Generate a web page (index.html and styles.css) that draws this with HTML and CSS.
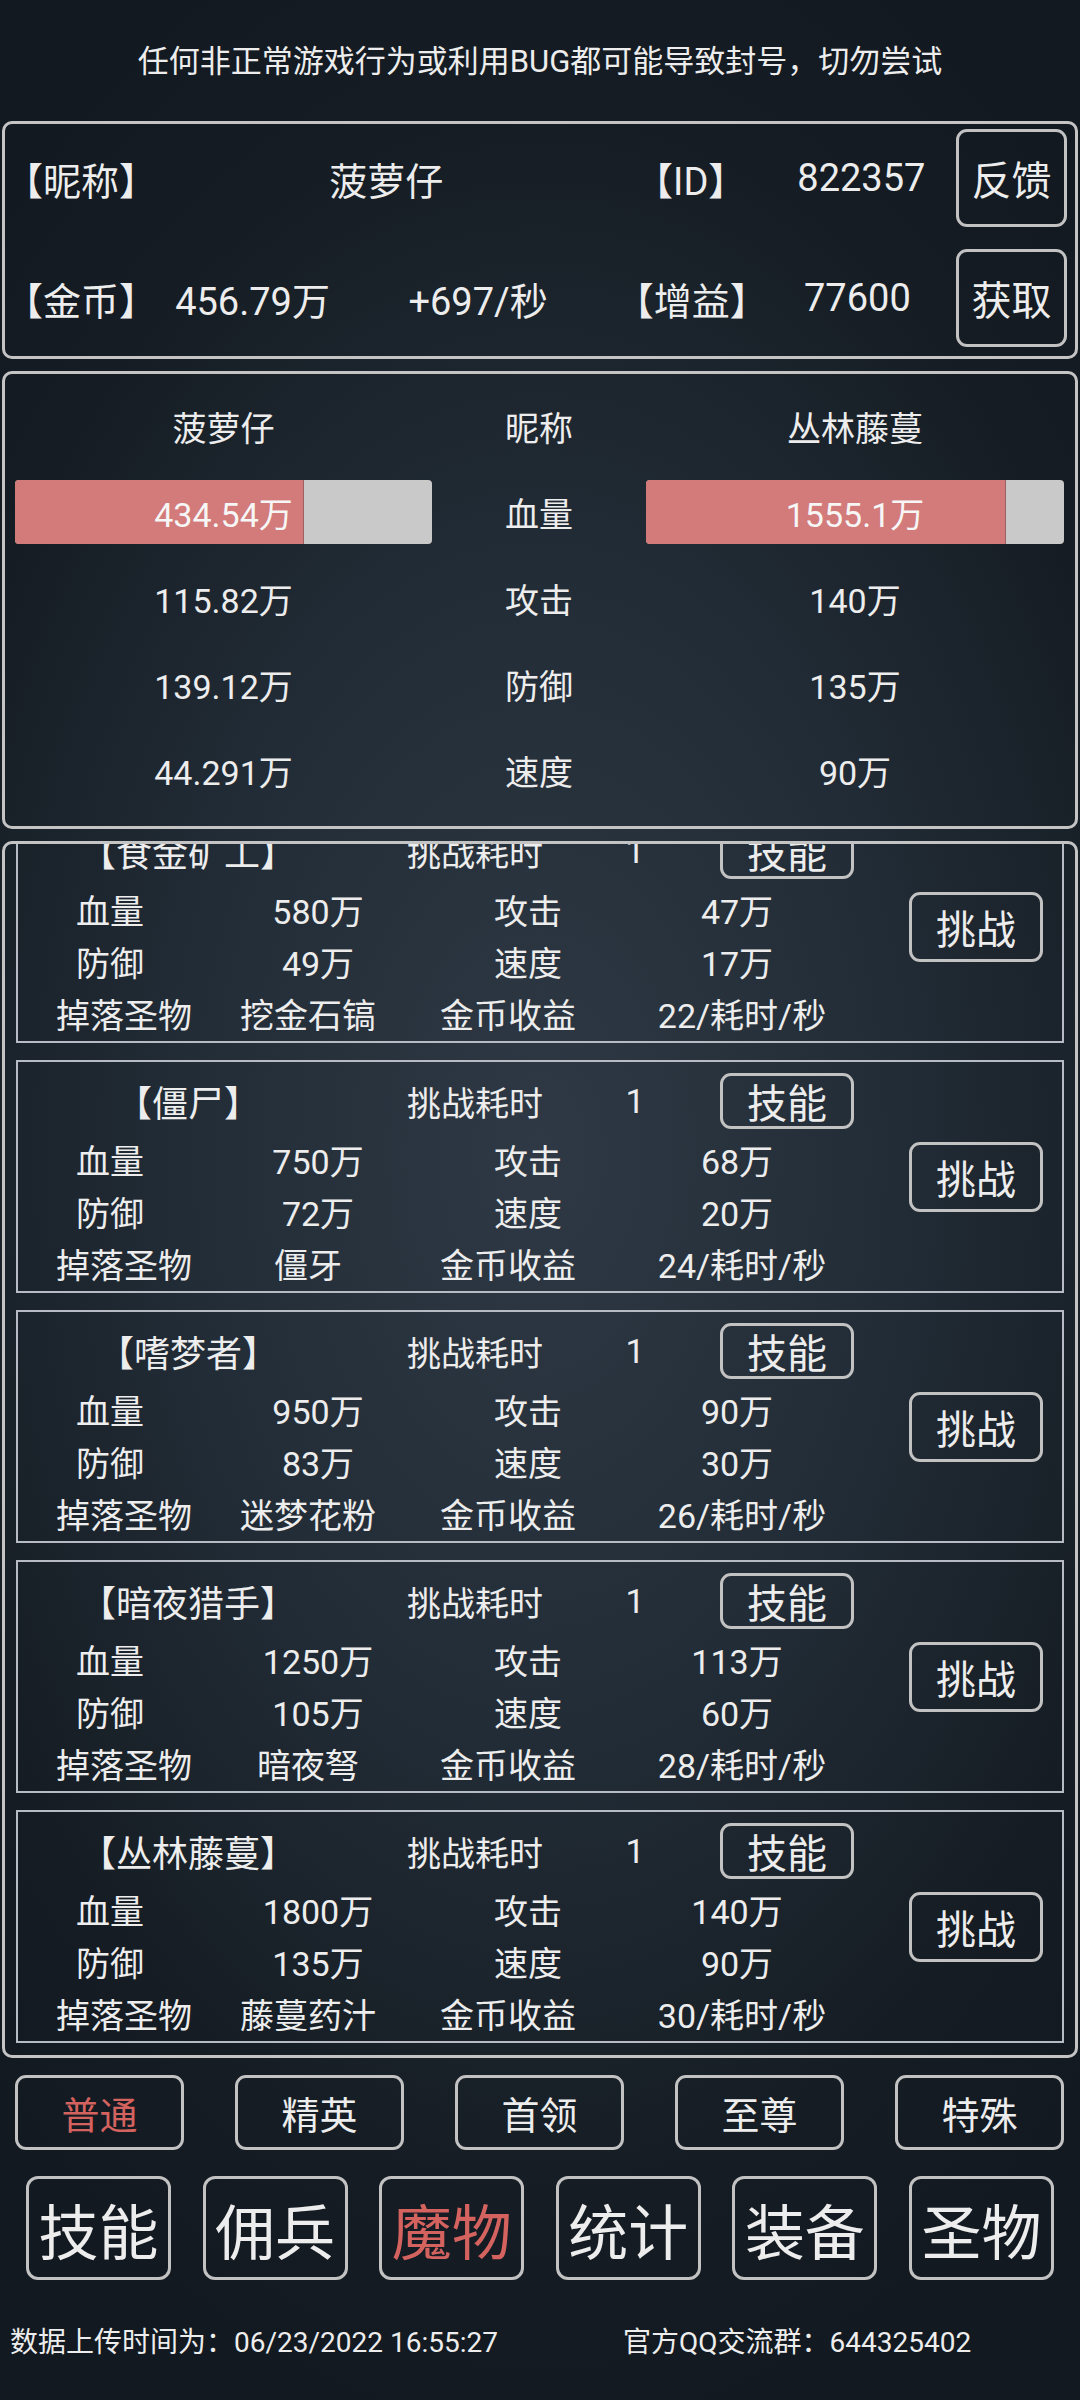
FILE: index.html
```html
<!DOCTYPE html>
<html lang="zh">
  <head>
    <meta charset="UTF-8" />
    <meta name="viewport" content="width=device-width, initial-scale=1.0" />
    <title>魔物</title>
    <link rel="stylesheet" href="styles.css">
  </head>
  <body>
    <div class="notice">任何非正常游戏行为或利用BUG都可能导致封号，切勿尝试</div>

    <div class="info box">
      <div class="info-row">
        <span class="c160">【昵称】</span>
        <span class="c444">菠萝仔</span>
        <span class="c166">【ID】</span>
        <span class="c176">822357</span>
        <button class="btn info-btn">反馈</button>
      </div>
      <div class="info-row">
        <span class="c160">【金币】</span>
        <span class="c176">456.79万</span>
        <span class="c276">+697/秒</span>
        <span class="c150">【增益】</span>
        <span class="c184">77600</span>
        <button class="btn info-btn">获取</button>
      </div>
    </div>

    <div class="battle box">
      <div class="battle-row">
        <span>菠萝仔</span><span>昵称</span><span>丛林藤蔓</span>
      </div>
      <div class="battle-row">
        <div class="hp"><div class="hp-fill" style="width: 69%"></div><span>434.54万</span></div>
        <span>血量</span>
        <div class="hp"><div class="hp-fill" style="width: 86%"></div><span>1555.1万</span></div>
      </div>
      <div class="battle-row">
        <span>115.82万</span><span>攻击</span><span>140万</span>
      </div>
      <div class="battle-row">
        <span>139.12万</span><span>防御</span><span>135万</span>
      </div>
      <div class="battle-row">
        <span>44.291万</span><span>速度</span><span>90万</span>
      </div>
    </div>

    <div class="monsters box">
      <div class="monster-list">

        <div class="card">
          <div class="card-main">
            <div class="card-head">
              <span class="h-name">【食金矿工】</span>
              <span class="h-label">挑战耗时</span>
              <span class="h-num">1</span>
              <button class="btn skill-btn">技能</button>
            </div>
            <div class="stat-row">
              <span class="s1">血量</span><span class="s2">580万</span><span class="s3">攻击</span><span class="s4">47万</span>
            </div>
            <div class="stat-row">
              <span class="s1">防御</span><span class="s2">49万</span><span class="s3">速度</span><span class="s4">17万</span>
            </div>
            <div class="stat-row">
              <span class="d1">掉落圣物</span><span class="d2">挖金石镐</span><span class="d3">金币收益</span><span class="d4">22/耗时/秒</span>
            </div>
          </div>
          <button class="btn fight-btn">挑战</button>
        </div>

        <div class="card">
          <div class="card-main">
            <div class="card-head">
              <span class="h-name">【僵尸】</span>
              <span class="h-label">挑战耗时</span>
              <span class="h-num">1</span>
              <button class="btn skill-btn">技能</button>
            </div>
            <div class="stat-row">
              <span class="s1">血量</span><span class="s2">750万</span><span class="s3">攻击</span><span class="s4">68万</span>
            </div>
            <div class="stat-row">
              <span class="s1">防御</span><span class="s2">72万</span><span class="s3">速度</span><span class="s4">20万</span>
            </div>
            <div class="stat-row">
              <span class="d1">掉落圣物</span><span class="d2">僵牙</span><span class="d3">金币收益</span><span class="d4">24/耗时/秒</span>
            </div>
          </div>
          <button class="btn fight-btn">挑战</button>
        </div>

        <div class="card">
          <div class="card-main">
            <div class="card-head">
              <span class="h-name">【嗜梦者】</span>
              <span class="h-label">挑战耗时</span>
              <span class="h-num">1</span>
              <button class="btn skill-btn">技能</button>
            </div>
            <div class="stat-row">
              <span class="s1">血量</span><span class="s2">950万</span><span class="s3">攻击</span><span class="s4">90万</span>
            </div>
            <div class="stat-row">
              <span class="s1">防御</span><span class="s2">83万</span><span class="s3">速度</span><span class="s4">30万</span>
            </div>
            <div class="stat-row">
              <span class="d1">掉落圣物</span><span class="d2">迷梦花粉</span><span class="d3">金币收益</span><span class="d4">26/耗时/秒</span>
            </div>
          </div>
          <button class="btn fight-btn">挑战</button>
        </div>

        <div class="card">
          <div class="card-main">
            <div class="card-head">
              <span class="h-name">【暗夜猎手】</span>
              <span class="h-label">挑战耗时</span>
              <span class="h-num">1</span>
              <button class="btn skill-btn">技能</button>
            </div>
            <div class="stat-row">
              <span class="s1">血量</span><span class="s2">1250万</span><span class="s3">攻击</span><span class="s4">113万</span>
            </div>
            <div class="stat-row">
              <span class="s1">防御</span><span class="s2">105万</span><span class="s3">速度</span><span class="s4">60万</span>
            </div>
            <div class="stat-row">
              <span class="d1">掉落圣物</span><span class="d2">暗夜弩</span><span class="d3">金币收益</span><span class="d4">28/耗时/秒</span>
            </div>
          </div>
          <button class="btn fight-btn">挑战</button>
        </div>

        <div class="card">
          <div class="card-main">
            <div class="card-head">
              <span class="h-name">【丛林藤蔓】</span>
              <span class="h-label">挑战耗时</span>
              <span class="h-num">1</span>
              <button class="btn skill-btn">技能</button>
            </div>
            <div class="stat-row">
              <span class="s1">血量</span><span class="s2">1800万</span><span class="s3">攻击</span><span class="s4">140万</span>
            </div>
            <div class="stat-row">
              <span class="s1">防御</span><span class="s2">135万</span><span class="s3">速度</span><span class="s4">90万</span>
            </div>
            <div class="stat-row">
              <span class="d1">掉落圣物</span><span class="d2">藤蔓药汁</span><span class="d3">金币收益</span><span class="d4">30/耗时/秒</span>
            </div>
          </div>
          <button class="btn fight-btn">挑战</button>
        </div>

      </div>
    </div>

    <div class="filters">
      <button class="btn filter-btn active">普通</button>
      <button class="btn filter-btn">精英</button>
      <button class="btn filter-btn">首领</button>
      <button class="btn filter-btn">至尊</button>
      <button class="btn filter-btn">特殊</button>
    </div>

    <div class="nav">
      <button class="btn nav-btn">技能</button>
      <button class="btn nav-btn">佣兵</button>
      <button class="btn nav-btn active">魔物</button>
      <button class="btn nav-btn">统计</button>
      <button class="btn nav-btn">装备</button>
      <button class="btn nav-btn">圣物</button>
    </div>

    <div class="footer">
      <span class="upload">数据上传时间为：06/23/2022 16:55:27</span>
      <span class="group">官方QQ交流群：644325402</span>
    </div>
  </body>
</html>
```

FILE: styles.css
```css
html,
body {
  margin: 0;
  width: 1080px;
  height: 2400px;
}
body {
  background: radial-gradient(ellipse 75% 55% at 50% 48%, #2e3945 0%, #222c36 45%, #151c23 80%, #121920 100%);
  color: #ededed;
  font-family: Roboto, "Noto Sans CJK SC", sans-serif;
  overflow: hidden;
}

.btn {
  font-family: inherit;
  color: #ededed;
  background: transparent;
  border: 3px solid #c2c2c2;
  border-radius: 11px;
  padding: 0;
  box-sizing: border-box;
  display: flex;
  align-items: center;
  justify-content: center;
}

.box {
  margin: 0 2px;
  border: 3px solid #c4c4c4;
  border-radius: 10px;
  box-sizing: border-box;
}

/* top notice */
.notice {
  height: 121px;
  display: flex;
  align-items: center;
  justify-content: center;
  font-size: 31px;
  padding-bottom: 4px;
  box-sizing: border-box;
}

/* player info */
.info {
  height: 238px;
  padding: 5px 8px 9px 0;
  display: flex;
  flex-direction: column;
  gap: 22px;
}
.info-row {
  display: flex;
  align-items: center;
  height: 98px;
  font-size: 38px;
}
.info-row span {
  text-align: center;
}
.c160 { width: 150px; margin-right: 10px; }
.c444 { width: 444px; }
.c166 { width: 166px; }
.c176 { width: 176px; }
.c276 { width: 276px; }
.c150 { width: 150px; }
.c184 { width: 184px; }
.info-btn {
  width: 111px;
  height: 98px;
  margin-left: 7px;
  font-size: 40px;
}

/* battle compare */
.battle {
  margin-top: 12px;
  height: 458px;
  padding: 9px 11px 12px 10px;
  font-size: 34px;
}
.battle-row {
  display: grid;
  grid-template-columns: 417px 214px 418px;
  align-items: center;
  justify-items: center;
  height: 86px;
}
.hp {
  position: relative;
  width: 100%;
  height: 64px;
  background: #c9c9c9;
  border-radius: 4px;
  overflow: hidden;
  display: flex;
  align-items: center;
  justify-content: center;
}
.hp-fill {
  position: absolute;
  left: 0;
  top: 0;
  bottom: 0;
  background: #d27b7a;
  border-right: 1px solid #9c6060;
}
.hp span {
  position: relative;
  color: #f6f6f6;
}

/* monster list */
.monsters {
  margin-top: 12px;
  height: 1217px;
  padding: 0 11px 0 11px;
  overflow: hidden;
}
.monster-list {
  margin-top: -34px;
  display: flex;
  flex-direction: column;
  gap: 17px;
}
.card {
  height: 233px;
  border: 2px solid #b6bbc4;
  box-sizing: border-box;
  display: grid;
  grid-template-columns: 891px 134px;
  padding-right: 19px;
  font-size: 34px;
}
.card-main {
  display: flex;
  flex-direction: column;
}
.card-head {
  display: flex;
  align-items: center;
  height: 56px;
  margin-top: 11px;
  margin-bottom: 4px;
}
.card-head span,
.stat-row span {
  text-align: center;
  white-space: nowrap;
}
.h-name { width: 340px; font-size: 36px; }
.h-label { width: 234px; }
.h-num { width: 86px; }
.skill-btn {
  width: 134px;
  height: 56px;
  margin-left: 42px;
  font-size: 40px;
}
.stat-row {
  display: flex;
  align-items: center;
  height: 52px;
}
.s1 { width: 184px; }
.s2 { width: 232px; }
.s3 { width: 188px; }
.s4 { width: 230px; }
.d1 { width: 212px; }
.d2 { width: 156px; }
.d3 { width: 244px; }
.d4 { width: 224px; }
.fight-btn {
  margin-top: 80px;
  width: 134px;
  height: 70px;
  font-size: 40px;
}

/* filters */
.filters {
  display: flex;
  justify-content: space-between;
  padding: 0 16px 0 15px;
  margin-top: 17px;
}
.filter-btn {
  width: 169px;
  height: 75px;
  font-size: 38px;
}
.active {
  color: #d4625f;
}

/* bottom nav */
.nav {
  display: flex;
  justify-content: space-between;
  padding: 0 26px 0 26px;
  margin-top: 26px;
}
.nav-btn {
  width: 145px;
  height: 104px;
  font-size: 60px;
  border-radius: 12px;
}

/* footer */
.footer {
  display: flex;
  margin-top: 40px;
  font-size: 28px;
  padding-left: 10px;
}
.upload {
  width: 613px;
}
```
